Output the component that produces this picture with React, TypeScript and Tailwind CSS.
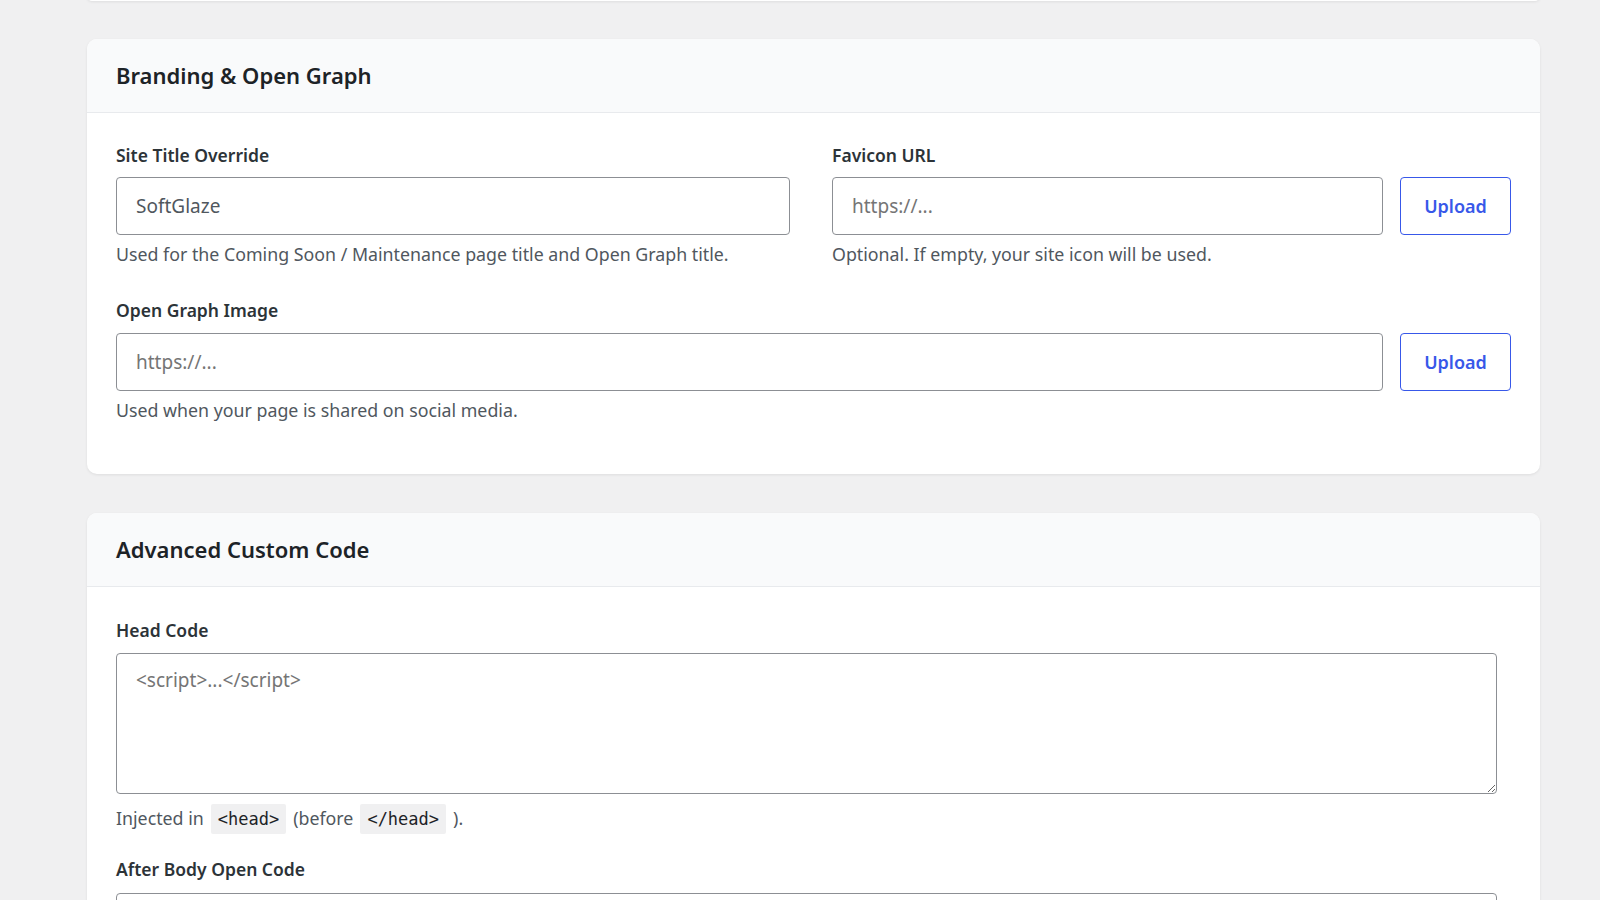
import React from 'react';

const font = { fontFamily: '"Noto Sans", "Open Sans", sans-serif' };

function Label({ children }: { children: React.ReactNode }) {
  return (
    <label className="block text-[17.5px] leading-[27px] font-semibold text-[#2c3338]">
      {children}
    </label>
  );
}

function Help({ children }: { children: React.ReactNode }) {
  return <p className="mt-[6px] text-[17.8px] leading-[26px] text-[#50575e]">{children}</p>;
}

function UrlInput({ placeholder, value }: { placeholder?: string; value?: string }) {
  return (
    <input
      type="text"
      defaultValue={value}
      placeholder={placeholder}
      className="h-[58px] w-full rounded-[4px] border border-[#8c8f94] bg-white px-[19px] text-[19px] text-[#50575e] placeholder:text-[#757575] outline-none"
    />
  );
}

function UploadButton() {
  return (
    <button className="h-[58px] w-[111px] shrink-0 rounded-[4px] border border-[#3858e9] bg-white text-[18px] font-semibold text-[#3858e9]">
      Upload
    </button>
  );
}

function Card({ title, children }: { title: string; children: React.ReactNode }) {
  return (
    <section className="rounded-[10px] bg-white shadow-[0_1px_3px_rgba(0,0,0,0.08)]">
      <header className="flex h-[74px] items-center rounded-t-[10px] border-b border-[#e8eaed] bg-[#f9fafb] px-[29px]">
        <h2 className="text-[22px] font-semibold text-[#1d2327]">{title}</h2>
      </header>
      {children}
    </section>
  );
}

function Code({ children }: { children: React.ReactNode }) {
  return (
    <code
      className="mx-[7px] inline-block rounded-[2px] bg-[#f0f0f1] px-[7px] text-[17px] leading-[30px] text-[#1d2327]"
      style={{ fontFamily: '"DejaVu Sans Mono", "Liberation Mono", monospace' }}
    >
      {children}
    </code>
  );
}

export default function App() {
  return (
    <div className="min-h-screen overflow-hidden bg-[#f0f0f1]" style={font}>
      <div className="ml-[87px] w-[1453px]">
        {/* tail of the previous card */}
        <div className="-mt-[4px] h-[5px] rounded-b-[10px] bg-white shadow-[0_1px_3px_rgba(0,0,0,0.08)]" />

        <div className="mt-[38px]">
          <Card title="Branding & Open Graph">
            <div className="px-[29px] pb-[51px] pt-[29px]">
              <div className="flex gap-[42px]">
                <div className="w-[674px]">
                  <Label>Site Title Override</Label>
                  <div className="mt-[8px]">
                    <UrlInput value="SoftGlaze" />
                  </div>
                  <Help>Used for the Coming Soon / Maintenance page title and Open Graph title.</Help>
                </div>
                <div className="flex-1">
                  <Label>Favicon URL</Label>
                  <div className="mt-[8px] flex gap-[17px]">
                    <UrlInput placeholder="https://..." />
                    <UploadButton />
                  </div>
                  <Help>Optional. If empty, your site icon will be used.</Help>
                </div>
              </div>

              <div className="mt-[30px]">
                <Label>Open Graph Image</Label>
                <div className="mt-[9px] flex gap-[17px]">
                  <UrlInput placeholder="https://..." />
                  <UploadButton />
                </div>
                <Help>Used when your page is shared on social media.</Help>
              </div>
            </div>
          </Card>
        </div>

        <div className="mt-[39px]">
          <Card title="Advanced Custom Code">
            <div className="px-[29px] pt-[30px]">
              <Label>Head Code</Label>
              <textarea
                placeholder="<script>...</script>"
                className="mt-[9px] block h-[141px] w-[1381px] rounded-[4px] border border-[#8c8f94] bg-white px-[19px] py-[12px] text-[19px] text-[#50575e] placeholder:text-[#757575] outline-none"
              />
              <p className="mt-[9px] text-[17.8px] leading-[30px] text-[#50575e]">
                Injected in<Code>&lt;head&gt;</Code>(before<Code>&lt;/head&gt;</Code>).
              </p>

              <div className="mt-[22px]">
                <Label>After Body Open Code</Label>
                <textarea
                  className="mt-[10px] block h-[140px] w-[1381px] rounded-[4px] border border-[#8c8f94] bg-white px-[19px] py-[12px] text-[19px] outline-none"
                />
              </div>
            </div>
          </Card>
        </div>
      </div>
    </div>
  );
}
